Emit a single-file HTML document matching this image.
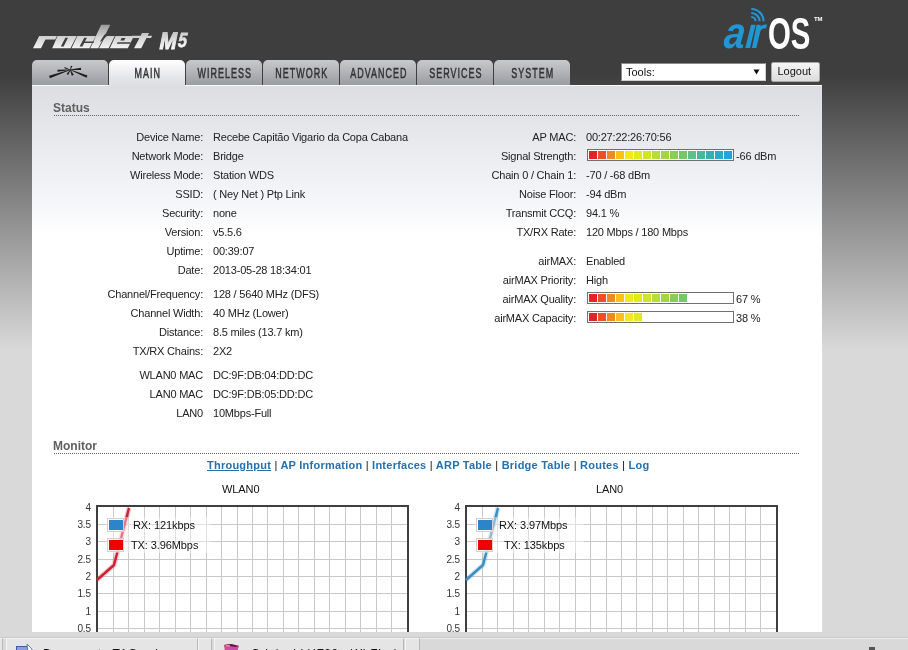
<!DOCTYPE html>
<html><head><meta charset="utf-8">
<style>
*{margin:0;padding:0;box-sizing:border-box}
html,body{width:908px;height:650px;overflow:hidden}
body{position:relative;font-family:"Liberation Sans",sans-serif;font-size:11px;color:#222;letter-spacing:-0.2px;
background:linear-gradient(to bottom,#3e3e3e 0px,#3e3e3e 75px,#d9d9d9 350px,#d9d9d9 650px)}
.abs{position:absolute}
#panel{position:absolute;left:32px;top:85px;width:790px;height:560px;
background:linear-gradient(to bottom,#dcdee2 0px,#dcdee2 1px,#f4f6f9 115px,#ffffff 148px,#ffffff 560px);border-top:1px solid #fafafa}
.tab{position:absolute;top:60px;width:76px;height:25px;border-radius:5px 5px 0 0;
background:linear-gradient(to bottom,#c8c9cc 0%,#b1b3b7 50%,#999ca2 100%);
font-size:14px;color:#333;text-align:center;line-height:25px;letter-spacing:0}
.tab span{position:absolute;top:1px;left:50%;white-space:nowrap;transform:translateX(-50%) translateX(0.8px) scaleX(0.64);letter-spacing:1.6px;-webkit-text-stroke:0.5px #333}
.tab.sel{height:26px;background:linear-gradient(to bottom,#ffffff 0%,#e4e5e9 70%,#dcdee2 100%)}
.lbl,.val{position:absolute;white-space:nowrap;line-height:11px;height:11px}
.lbl{text-align:right}
.hdr{position:absolute;left:53px;font-weight:bold;font-size:12px;color:#5f5f5f;letter-spacing:0}
.dots{position:absolute;left:54px;width:746px;height:1px;background:repeating-linear-gradient(to right,#646464 0px,#646464 1px,transparent 1px,transparent 2px)}
.bar{position:absolute;width:147px;height:12px;border:1px solid #707070;background:#fff}
.bar i{position:absolute;top:1px;width:8px;height:8px}
#links{position:absolute;left:207px;top:459px;font-weight:bold;font-size:11px;color:#111;white-space:nowrap;letter-spacing:0.24px}
#links a{color:#2670ad;text-decoration:none}
#links a.u{text-decoration:underline}
#links b{font-weight:normal}
#task{position:absolute;left:0;top:632px;width:908px;height:18px;background:#d9d9d9;overflow:hidden}
.tb{position:absolute;top:6px;height:14px;background:#e5e5e5;border-left:1px solid #f4f4f4;border-right:1px solid #b8b8b8;border-top:1px solid #f4f4f4}
.tt{top:16px;font-size:12px;line-height:12px;color:#111;white-space:nowrap;letter-spacing:0.5px}
</style></head>
<body>
<div id="wrap" style="position:absolute;left:0;top:0;width:908px;height:650px;will-change:transform">
<svg class="abs" style="left:0;top:0" width="908" height="60" viewBox="0 0 908 60">
<defs><linearGradient id="rg" gradientUnits="userSpaceOnUse" x1="0" y1="25" x2="0" y2="49"><stop offset="0" stop-color="#9c9c9c"/><stop offset="0.5" stop-color="#d2d2d2"/><stop offset="1" stop-color="#f4f4f4"/></linearGradient><linearGradient id="rg2" gradientUnits="userSpaceOnUse" x1="0" y1="-23.5" x2="0" y2="0"><stop offset="0" stop-color="#a8a8a8"/><stop offset="0.5" stop-color="#d6d6d6"/><stop offset="1" stop-color="#f8f8f8"/></linearGradient></defs>
<path d="M33.00 48.20 L41.00 48.20 L45.40 39.40 L55.20 39.40 L56.95 35.90 L39.15 35.90Z M52.20 48.20 L70.40 48.20 L76.75 35.90 L57.55 35.90Z M71.50 48.20 L89.40 48.20 L95.75 35.90 L77.35 35.90Z M90.30 48.20 L98.20 48.20 L110.35 24.70 L101.15 24.70Z M99.00 48.20 L108.60 48.20 L114.75 35.90 L105.55 35.90Z M109.80 48.20 L127.80 48.20 L133.95 35.90 L115.55 35.90Z M134.00 48.20 L141.20 48.20 L149.05 33.10 L142.05 33.10Z M131.00 38.10 L151.00 38.10 L152.30 35.80 L131.80 35.80Z" fill="url(#rg)"/>
<path d="M60.80 46.60 L63.60 46.60 L68.00 37.80 L65.40 37.80Z M79.60 46.60 L82.40 46.60 L86.90 37.80 L84.20 37.80Z M81.50 43.00 L93.50 43.00 L94.20 41.50 L82.30 41.50Z M100.00 41.50 L101.00 41.50 L108.60 34.50 L104.50 34.50Z M120.40 40.60 L124.20 40.60 L125.40 38.10 L121.60 38.10Z M116.80 43.80 L130.00 43.80 L130.70 42.30 L117.50 42.30Z" fill="#3e3e3e"/>
<text transform="translate(158.6,48.6) scale(0.86,1.0) skewX(-13)" font-family="Liberation Sans" font-weight="bold" font-size="23.8" fill="url(#rg2)" stroke="url(#rg2)" stroke-width="1.2">M</text>
<text transform="translate(177.4,46.7) scale(0.8,1) skewX(-6)" font-family="Liberation Sans" font-weight="bold" font-style="italic" font-size="20.5" fill="url(#rg2)" stroke="url(#rg2)" stroke-width="0.6">5</text>
<g fill="#1f97d4"><text transform="translate(723,48) scale(0.86,1) skewX(-7)" font-family="Liberation Sans" font-weight="bold" font-style="italic" font-size="44">a</text>
<path d="M745.3 48L750 48L755.6 24.8L751 24.8Z"/>
<path d="M752 48L756.3 48L760.6 30.5Q762.5 27.8 766.2 28.2L767 24.6Q762.5 24.2 760.3 26.5L760.7 24.8L756.6 24.8Z"/></g>
<g fill="none" stroke="#1f97d4" stroke-width="2.2">
<path d="M751.3 17 A4.3 4.3 0 0 1 755.6 21.3"/>
<path d="M751.3 13 A8.3 8.3 0 0 1 759.6 21.3"/>
<path d="M751.3 9 A12.3 12.3 0 0 1 763.6 21.3"/>
</g>
<text transform="translate(768,48.6) scale(0.66,1)" font-family="Liberation Sans" font-weight="bold" font-size="44.5" fill="#ffffff">OS</text>
<text x="814" y="21" font-family="Liberation Sans" font-weight="bold" font-size="6" fill="#ffffff">TM</text>
</svg>
<div id="panel"></div>

<div class="abs" style="left:621px;top:63px;width:145px;height:18px;background:#fff;border:1px solid #8a8a8a;border-right-color:#d0d0d0;border-bottom-color:#d0d0d0"></div>
<div class="abs" style="left:626px;top:67px;font-size:11px;line-height:11px;color:#111;letter-spacing:0">Tools:</div>
<svg class="abs" style="left:753px;top:69px" width="7" height="6"><path d="M0.5 0.5H6.5L3.5 5.5Z" fill="#111"/></svg>
<div class="abs" style="left:771px;top:62px;width:49px;height:20px;background:linear-gradient(to bottom,#f6f6f6,#dcdcdc);border:1px solid #a8a8a8;border-radius:2px"></div>
<div class="abs" style="left:777.5px;top:66px;font-size:11px;line-height:11px;color:#111;letter-spacing:0">Logout</div>
<div class="tab" style="left:32px"></div>
<div class="tab sel" style="left:109px"><span>MAIN</span></div>
<div class="tab" style="left:186px"><span>WIRELESS</span></div>
<div class="tab" style="left:263px"><span>NETWORK</span></div>
<div class="tab" style="left:340px"><span>ADVANCED</span></div>
<div class="tab" style="left:417px"><span>SERVICES</span></div>
<div class="tab" style="left:494px"><span>SYSTEM</span></div>

<svg class="abs" style="left:0;top:0" width="100" height="90"><g fill="#1e1e1e"><path d="M70.19 69.49 L49.07 75.77 L49.93 78.23 L70.41 70.11Z"/><path d="M70.18 70.10 L86.51 77.80 L87.49 75.40 L70.42 69.50Z"/><path d="M70.28 69.56 L57.43 69.85 L57.57 71.75 L70.32 70.04Z"/><path d="M70.32 70.06 L81.09 69.95 L80.91 67.85 L70.28 69.54Z"/><path d="M70.49 69.86 L72.36 66.26 L70.84 65.74 L70.11 69.74Z"/><path d="M70.09 69.67 L66.55 73.97 L68.25 75.03 L70.51 69.93Z"/><path d="M70.05 69.91 L71.80 75.76 L73.80 74.84 L70.55 69.69Z"/><path d="M70.36 69.64 L64.75 66.95 L64.25 68.25 L70.24 69.96Z"/></g></svg>
<div class="hdr" style="top:101px">Status</div>
<div class="dots" style="top:115px"></div>

<div class="lbl" style="top:132px;right:705px">Device Name:</div>
<div class="val" style="top:132px;left:213px">Recebe Capitão Vigario da Copa Cabana</div>
<div class="lbl" style="top:151px;right:705px">Network Mode:</div>
<div class="val" style="top:151px;left:213px">Bridge</div>
<div class="lbl" style="top:170px;right:705px">Wireless Mode:</div>
<div class="val" style="top:170px;left:213px">Station WDS</div>
<div class="lbl" style="top:189px;right:705px">SSID:</div>
<div class="val" style="top:189px;left:213px">( Ney Net ) Ptp Link</div>
<div class="lbl" style="top:208px;right:705px">Security:</div>
<div class="val" style="top:208px;left:213px">none</div>
<div class="lbl" style="top:227px;right:705px">Version:</div>
<div class="val" style="top:227px;left:213px">v5.5.6</div>
<div class="lbl" style="top:246px;right:705px">Uptime:</div>
<div class="val" style="top:246px;left:213px">00:39:07</div>
<div class="lbl" style="top:265px;right:705px">Date:</div>
<div class="val" style="top:265px;left:213px">2013-05-28 18:34:01</div>
<div class="lbl" style="top:289px;right:705px">Channel/Frequency:</div>
<div class="val" style="top:289px;left:213px">128 / 5640 MHz (DFS)</div>
<div class="lbl" style="top:308px;right:705px">Channel Width:</div>
<div class="val" style="top:308px;left:213px">40 MHz (Lower)</div>
<div class="lbl" style="top:327px;right:705px">Distance:</div>
<div class="val" style="top:327px;left:213px">8.5 miles (13.7 km)</div>
<div class="lbl" style="top:346px;right:705px">TX/RX Chains:</div>
<div class="val" style="top:346px;left:213px">2X2</div>
<div class="lbl" style="top:370px;right:705px">WLAN0 MAC</div>
<div class="val" style="top:370px;left:213px">DC:9F:DB:04:DD:DC</div>
<div class="lbl" style="top:389px;right:705px">LAN0 MAC</div>
<div class="val" style="top:389px;left:213px">DC:9F:DB:05:DD:DC</div>
<div class="lbl" style="top:408px;right:705px">LAN0</div>
<div class="val" style="top:408px;left:213px">10Mbps-Full</div>
<div class="lbl" style="top:132px;right:332px">AP MAC:</div>
<div class="val" style="top:132px;left:586px">00:27:22:26:70:56</div>
<div class="lbl" style="top:151px;right:332px">Signal Strength:</div>
<div class="lbl" style="top:170px;right:332px">Chain 0 / Chain 1:</div>
<div class="val" style="top:170px;left:586px">-70 / -68 dBm</div>
<div class="lbl" style="top:189px;right:332px">Noise Floor:</div>
<div class="val" style="top:189px;left:586px">-94 dBm</div>
<div class="lbl" style="top:208px;right:332px">Transmit CCQ:</div>
<div class="val" style="top:208px;left:586px">94.1 %</div>
<div class="lbl" style="top:227px;right:332px">TX/RX Rate:</div>
<div class="val" style="top:227px;left:586px">120 Mbps / 180 Mbps</div>
<div class="lbl" style="top:256px;right:332px">airMAX:</div>
<div class="val" style="top:256px;left:586px">Enabled</div>
<div class="lbl" style="top:275px;right:332px">airMAX Priority:</div>
<div class="val" style="top:275px;left:586px">High</div>
<div class="lbl" style="top:294px;right:332px">airMAX Quality:</div>
<div class="lbl" style="top:313px;right:332px">airMAX Capacity:</div>
<div class="bar" style="left:587px;top:149px"><i style="left:1px;background:#e8202a"></i><i style="left:10px;background:#f04d24"></i><i style="left:19px;background:#f5881f"></i><i style="left:28px;background:#fbbf16"></i><i style="left:37px;background:#f4e817"></i><i style="left:46px;background:#e3ea1c"></i><i style="left:55px;background:#cfe42a"></i><i style="left:64px;background:#b8de36"></i><i style="left:73px;background:#a1d63f"></i><i style="left:82px;background:#8ace4f"></i><i style="left:91px;background:#74c86a"></i><i style="left:100px;background:#5cc087"></i><i style="left:109px;background:#45b89e"></i><i style="left:118px;background:#33b1b5"></i><i style="left:127px;background:#24abcf"></i><i style="left:136px;background:#1aa5e3"></i></div>
<div class="val" style="top:151px;left:736px">-66 dBm</div>
<div class="bar" style="left:587px;top:292px"><i style="left:1px;background:#e8202a"></i><i style="left:10px;background:#f04d24"></i><i style="left:19px;background:#f5881f"></i><i style="left:28px;background:#fbbf16"></i><i style="left:37px;background:#f4e817"></i><i style="left:46px;background:#e3ea1c"></i><i style="left:55px;background:#cfe42a"></i><i style="left:64px;background:#b8de36"></i><i style="left:73px;background:#a1d63f"></i><i style="left:82px;background:#8ace4f"></i><i style="left:91px;background:#74c86a"></i></div>
<div class="val" style="top:294px;left:736px">67 %</div>
<div class="bar" style="left:587px;top:311px"><i style="left:1px;background:#e8202a"></i><i style="left:10px;background:#f04d24"></i><i style="left:19px;background:#f5881f"></i><i style="left:28px;background:#fbbf16"></i><i style="left:37px;background:#f4e817"></i><i style="left:46px;background:#e3ea1c"></i></div>
<div class="val" style="top:313px;left:736px">38 %</div>

<div class="hdr" style="top:439px">Monitor</div>
<div class="dots" style="top:453px"></div>
<div id="links"><a class="u">Throughput</a> <b>|</b> <a>AP Information</a> <b>|</b> <a>Interfaces</a> <b>|</b> <a>ARP Table</a> <b>|</b> <a>Bridge Table</a> <b>|</b> <a>Routes</a> <b>|</b> <a>Log</a></div>

<svg class="abs" style="left:0;top:0" width="908" height="650" viewBox="0 0 908 650" font-family="Liberation Sans" font-size="11" fill="#111" letter-spacing="-0.1"><path d="M113.5 507V640 M128.5 507V640 M144.5 507V640 M159.5 507V640 M175.5 507V640 M190.5 507V640 M206.5 507V640 M221.5 507V640 M237.5 507V640 M252.5 507V640 M267.5 507V640 M283.5 507V640 M298.5 507V640 M314.5 507V640 M329.5 507V640 M345.5 507V640 M360.5 507V640 M376.5 507V640 M391.5 507V640 M98 524.5H407 M98 541.5H407 M98 559.5H407 M98 576.5H407 M98 593.5H407 M98 611.5H407 M98 628.5H407 M98 646.5H407" stroke="#c8c8c8" stroke-width="1" fill="none"/><path d="M97 660V506H408V660" stroke="#3f3f3f" stroke-width="2" fill="none"/><polyline points="97,580 114,565 129,508" stroke="#cc2233" stroke-opacity="0.25" stroke-width="5" fill="none" stroke-linejoin="round"/><polyline points="97,580 114,565 129,508" stroke="#cc2233" stroke-width="2.4" fill="none" stroke-linejoin="round"/><text x="91" y="510.6" text-anchor="end" font-size="10" fill="#333">4</text><text x="91" y="528.2" text-anchor="end" font-size="10" fill="#333">3.5</text><text x="91" y="545.2" text-anchor="end" font-size="10" fill="#333">3</text><text x="91" y="563.2" text-anchor="end" font-size="10" fill="#333">2.5</text><text x="91" y="580.2" text-anchor="end" font-size="10" fill="#333">2</text><text x="91" y="597.2" text-anchor="end" font-size="10" fill="#333">1.5</text><text x="91" y="615.2" text-anchor="end" font-size="10" fill="#333">1</text><text x="91" y="632.2" text-anchor="end" font-size="10" fill="#333">0.5</text><rect x="106" y="517" width="105" height="36" fill="#fff" fill-opacity="0.4"/><rect x="107.5" y="518.5" width="16" height="13" fill="#fff" fill-opacity="0.6" stroke="#dccccc" stroke-width="1"/><rect x="109" y="520" width="14" height="10" fill="#2a86c8"/><rect x="107.5" y="538.5" width="16" height="13" fill="#fff" fill-opacity="0.6" stroke="#dccccc" stroke-width="1"/><rect x="109" y="540" width="14" height="10" fill="#ee0000"/><text x="133" y="529">RX: 121kbps</text><text x="131" y="549">TX: 3.96Mbps</text><text x="222" y="493">WLAN0</text><path d="M482.5 507V640 M497.5 507V640 M513.5 507V640 M528.5 507V640 M544.5 507V640 M559.5 507V640 M575.5 507V640 M590.5 507V640 M606.5 507V640 M621.5 507V640 M636.5 507V640 M652.5 507V640 M667.5 507V640 M683.5 507V640 M698.5 507V640 M714.5 507V640 M729.5 507V640 M745.5 507V640 M760.5 507V640 M467 524.5H776 M467 541.5H776 M467 559.5H776 M467 576.5H776 M467 593.5H776 M467 611.5H776 M467 628.5H776 M467 646.5H776" stroke="#c8c8c8" stroke-width="1" fill="none"/><path d="M466 660V506H777V660" stroke="#3f3f3f" stroke-width="2" fill="none"/><polyline points="466,580 483,565 498,508" stroke="#3a8fc0" stroke-opacity="0.25" stroke-width="5" fill="none" stroke-linejoin="round"/><polyline points="466,580 483,565 498,508" stroke="#3a8fc0" stroke-width="2.4" fill="none" stroke-linejoin="round"/><text x="460" y="510.6" text-anchor="end" font-size="10" fill="#333">4</text><text x="460" y="528.2" text-anchor="end" font-size="10" fill="#333">3.5</text><text x="460" y="545.2" text-anchor="end" font-size="10" fill="#333">3</text><text x="460" y="563.2" text-anchor="end" font-size="10" fill="#333">2.5</text><text x="460" y="580.2" text-anchor="end" font-size="10" fill="#333">2</text><text x="460" y="597.2" text-anchor="end" font-size="10" fill="#333">1.5</text><text x="460" y="615.2" text-anchor="end" font-size="10" fill="#333">1</text><text x="460" y="632.2" text-anchor="end" font-size="10" fill="#333">0.5</text><rect x="475" y="517" width="109" height="36" fill="#fff" fill-opacity="0.4"/><rect x="476.5" y="518.5" width="16" height="13" fill="#fff" fill-opacity="0.6" stroke="#dccccc" stroke-width="1"/><rect x="478" y="520" width="14" height="10" fill="#2a86c8"/><rect x="476.5" y="538.5" width="16" height="13" fill="#fff" fill-opacity="0.6" stroke="#dccccc" stroke-width="1"/><rect x="478" y="540" width="14" height="10" fill="#ee0000"/><text x="499" y="529">RX: 3.97Mbps</text><text x="504" y="549">TX: 135kbps</text><text x="596" y="493">LAN0</text></svg>

<div id="task">
<div class="abs" style="left:0;top:5px;width:908px;height:1px;background:#c9c9c9"></div>
<div class="abs" style="left:0;top:6px;width:908px;height:1px;background:#ededed"></div>
<div class="tb" style="left:-10px;width:13px"></div>
<div class="tb" style="left:6px;width:192px"></div>
<div class="tb" style="left:198px;width:14px"></div>
<div class="tb" style="left:214px;width:190px"></div>
<div class="tb" style="left:405px;width:15px"></div>
<svg class="abs" style="left:16px;top:8px" width="17" height="10"><rect x="0" y="6" width="12" height="6" fill="#3d5aa8"/><rect x="1" y="7" width="10" height="4" fill="#8aa0d8"/><path d="M11 4L16 9V12H12Z" fill="#fff" stroke="#6a7ab0" stroke-width="1"/></svg>
<svg class="abs" style="left:223px;top:8px" width="18" height="10"><path d="M1 5L8 4L16 6L14 12H2Z" fill="#d04aa8"/><path d="M1 5L8 4L16 6L12 7Z" fill="#5a1a38"/><rect x="3" y="5" width="4" height="1.5" fill="#e0a040"/></svg>
<div class="abs tt" style="left:43px;width:150px;overflow:hidden">Documento TAG sobre</div>
<div class="abs tt" style="left:251px;width:145px;overflow:hidden">Original LHF30 - Wi-Fi - UF Barra Ltda</div>
<div class="abs" style="left:869px;top:15px;width:6px;height:3px;background:#555"></div>
</div>
</div>
</body></html>
